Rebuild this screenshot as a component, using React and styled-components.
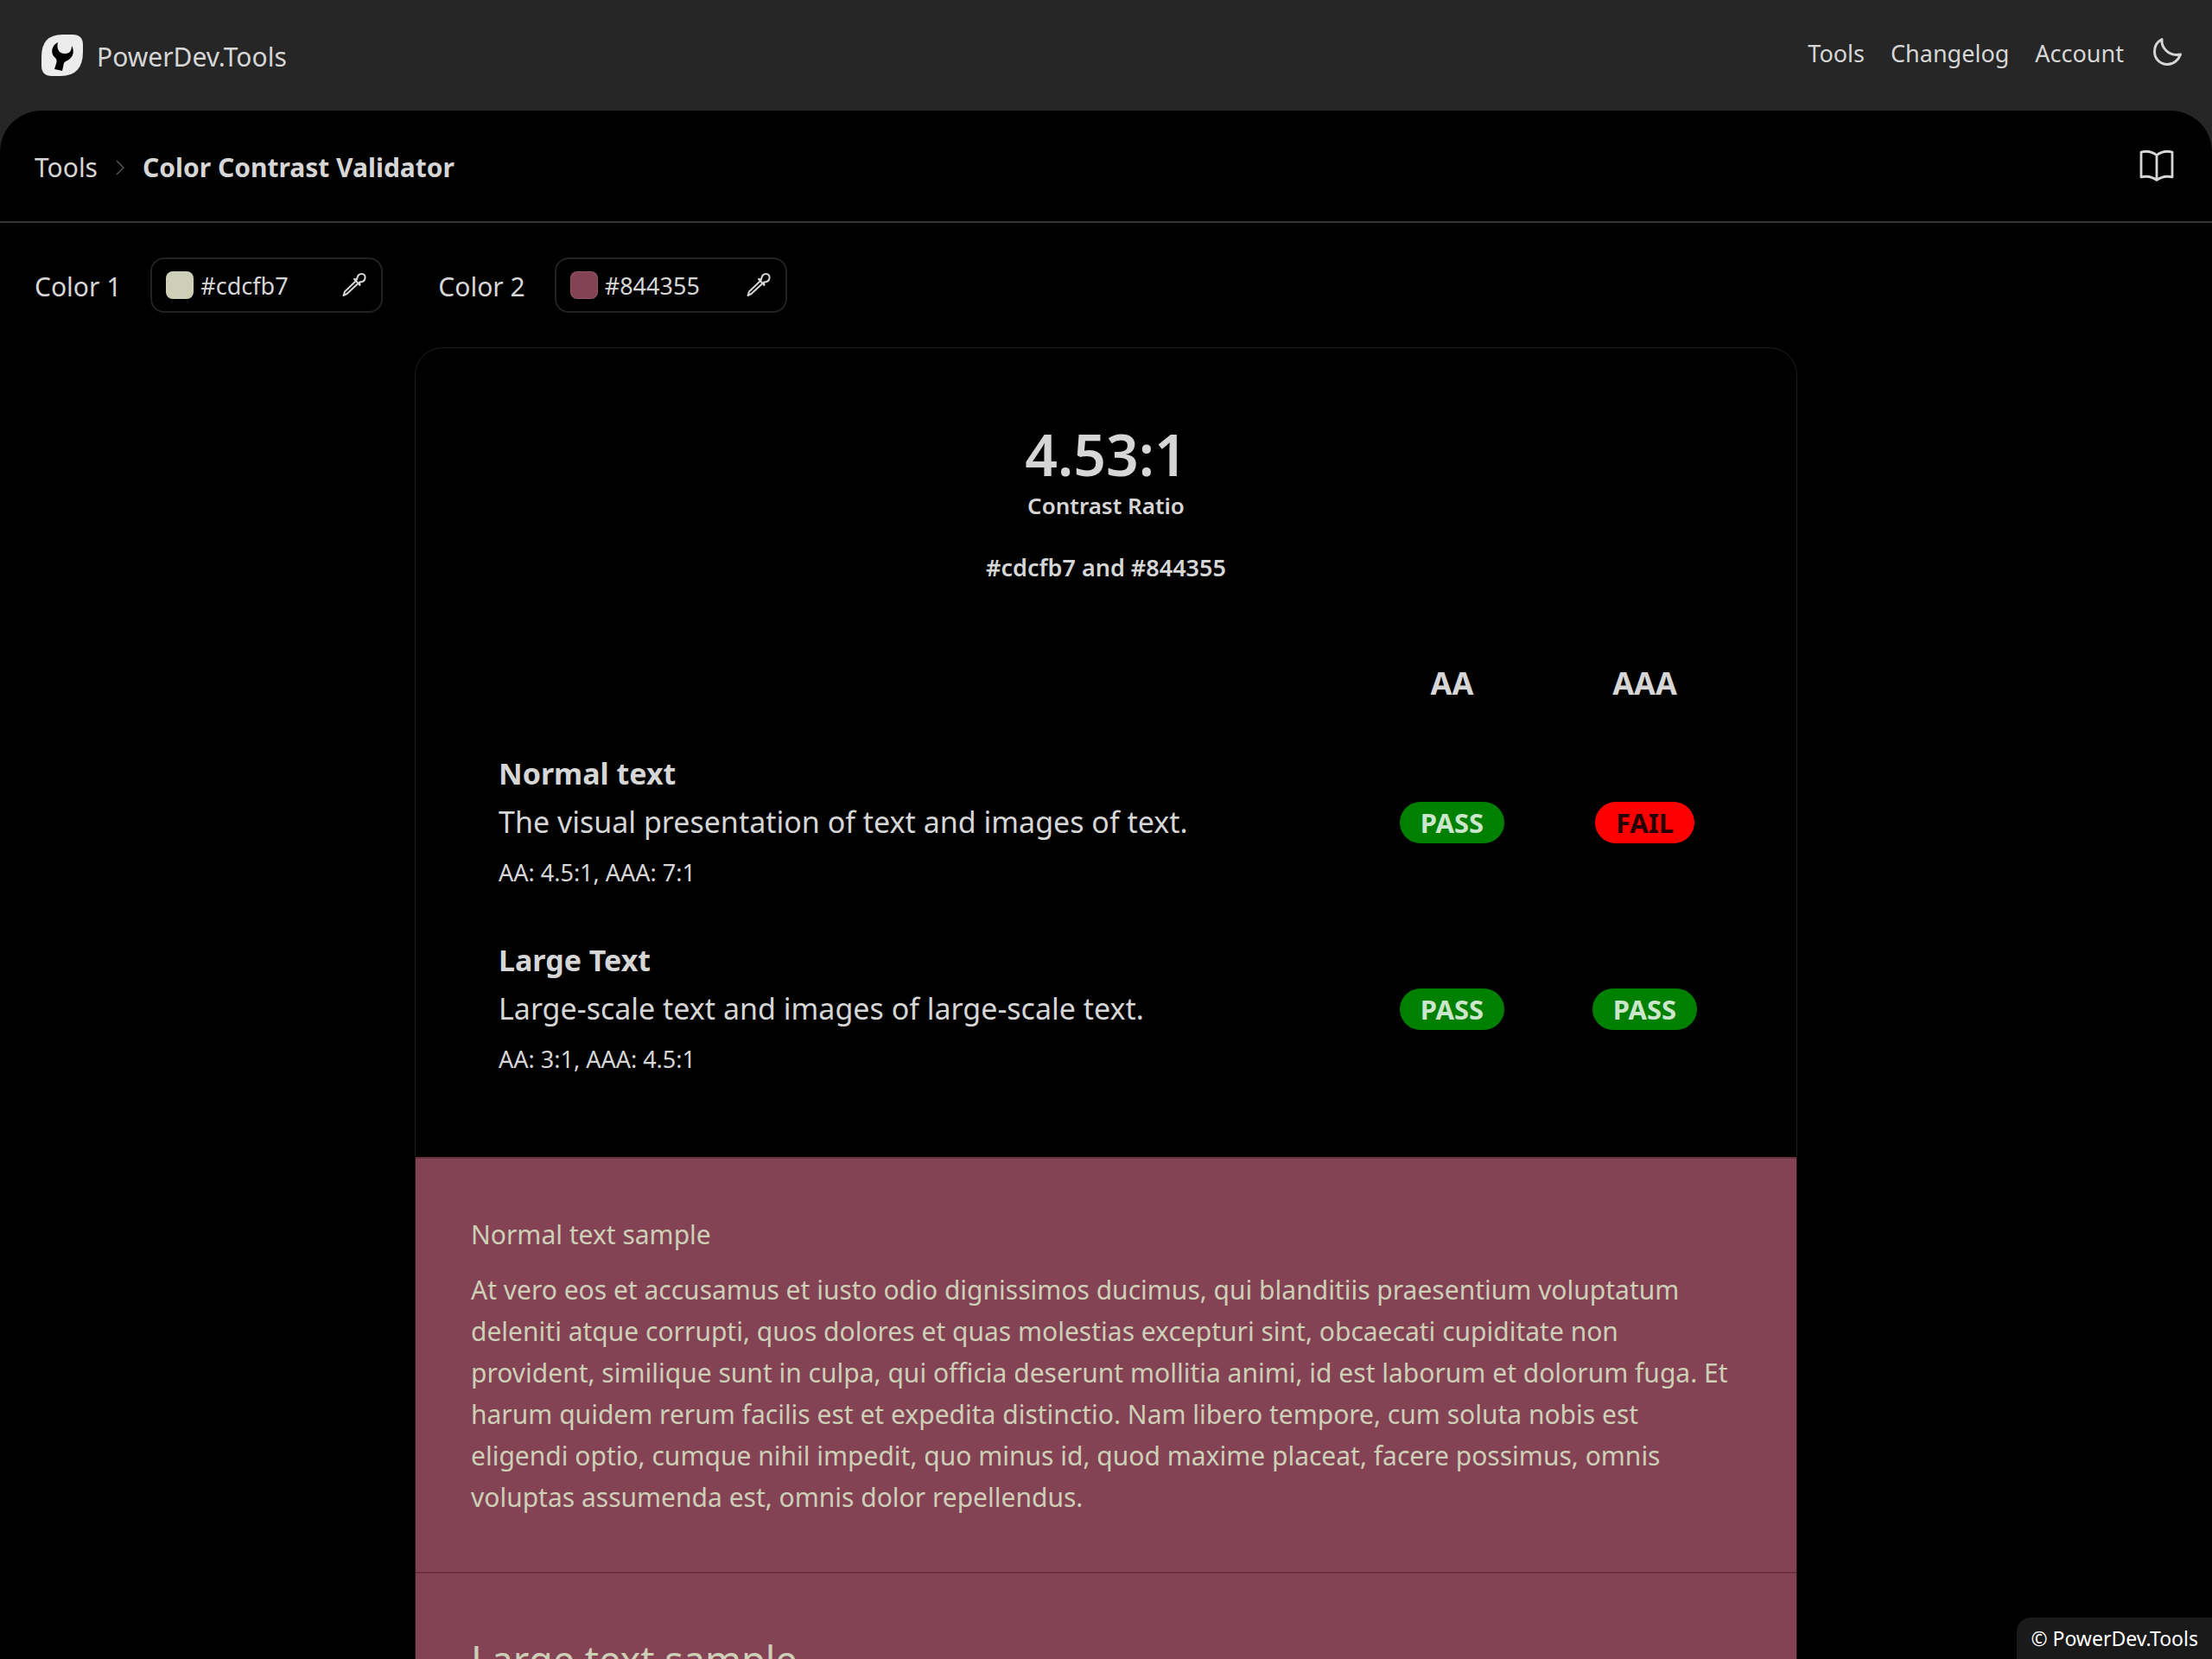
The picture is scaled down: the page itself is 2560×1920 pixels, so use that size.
import React, { useState } from "react";
import styled, { createGlobalStyle, css } from "styled-components";

const GlobalStyle = createGlobalStyle`
  * {
    box-sizing: border-box;
  }
  html {
    scrollbar-width: none;
  }
  body {
    margin: 0;
    background-color: #262626;
    color: #d6d6d6;
    font-family: "Noto Sans", "Open Sans", sans-serif;
    font-size: 30px;
    line-height: 48px;
  }
  a {
    color: inherit;
    text-decoration: none;
  }
  h1, h2, p {
    margin: 0;
    font-weight: 400;
  }
`;

const Header = styled.header`
  display: flex;
  align-items: center;
  justify-content: space-between;
  height: 128px;
  padding: 0 32px 0 48px;
`;

const Brand = styled.a`
  display: flex;
  align-items: center;
  gap: 16px;
`;

const BrandName = styled.span`
  padding-top: 3px;
`;

const Nav = styled.nav`
  display: flex;
  align-items: center;
  gap: 30px;
  padding-bottom: 4px;
  font-size: 27px;
`;

const IconButton = styled.button`
  display: flex;
  padding: 0;
  border: 0;
  background: none;
  color: inherit;
  cursor: pointer;
`;

const Main = styled.main`
  min-height: calc(100vh - 128px);
  border-radius: 48px 48px 0 0;
  background-color: #000000;
`;

const TitleBar = styled.div`
  display: flex;
  align-items: center;
  justify-content: space-between;
  height: 130px;
  padding: 0 40px;
  border-bottom: 2px solid #333333;
`;

const Breadcrumb = styled.div`
  display: flex;
  align-items: center;
  gap: 21px;
  padding-top: 3px;
`;

const PageTitle = styled.h1`
  font-size: 30px;
  font-weight: 700;
`;

const ColorForm = styled.form`
  display: flex;
  gap: 64px;
  padding: 40px;
`;

const Field = styled.div`
  display: flex;
  align-items: center;
  gap: 34px;
`;

const Label = styled.label`
  padding-top: 3px;
`;

const ColorBox = styled.div`
  display: flex;
  align-items: center;
  width: 269px;
  height: 64px;
  padding: 0 16px;
  border: 2px solid #222222;
  border-radius: 16px;
`;

const Swatch = styled.span`
  flex: none;
  width: 32px;
  height: 32px;
  border: 1px solid rgba(255, 255, 255, 0.1);
  border-radius: 8px;
`;

const ColorInput = styled.input`
  flex: 1;
  min-width: 0;
  padding: 2px 8px 0;
  border: 0;
  outline: 0;
  background: none;
  color: inherit;
  font: inherit;
  font-size: 27px;
`;

const Card = styled.section`
  max-width: 1600px;
  margin: 0 auto;
  border: 1px solid #1c1c1c;
  border-radius: 32px 32px 0 0;
`;

const Ratio = styled.div`
  padding: 86px 64px 62px;
  line-height: 40px;
  text-align: center;
`;

const RatioValue = styled.div`
  margin-bottom: 4px;
  font-size: 66px;
  font-weight: 600;
  line-height: 72px;
`;

const RatioLabel = styled.p`
  font-size: 26px;
  font-weight: 600;
`;

const RatioColors = styled.p`
  margin-top: 32px;
  font-size: 27px;
  font-weight: 600;
`;

const Results = styled.div`
  padding: 0 64px 64px;
`;

const ResultsTable = styled.table`
  width: 100%;
  border-spacing: 0;
  font-size: 34px;
  line-height: 56px;

  th {
    font-weight: 700;
  }
  th, td {
    padding: 24px 32px;
  }
`;

const LevelHead = styled.th`
  width: 223px;
  font-size: 36px;
`;

const Criterion = styled.th`
  text-align: left;

  p {
    font-weight: 400;
  }
`;

const Limits = styled.p`
  margin: 3px 0 -3px;
  font-size: 27px;
`;

const ResultCell = styled.td`
  text-align: center;
`;

const Badge = styled.span`
  display: inline-block;
  padding: 0 24px;
  border-radius: 24px;
  font-size: 31px;
  font-weight: 700;
  line-height: 48px;
  ${({ $pass }) =>
    $pass
      ? css`
          background-color: #008000;
          color: #cce6cc;
        `
      : css`
          background-color: #ff0000;
          color: #260000;
        `}
`;

const Sample = styled.div`
  padding: 66px 64px 62px;
  box-shadow: inset 0 2px 0 #6b3042;
`;

const SampleTitle = styled.h2`
  margin-bottom: 16px;
  font-size: ${({ $large }) => ($large ? "45px" : "30px")};
  line-height: ${({ $large }) => ($large ? "72px" : "48px")};
`;

const SampleText = styled.p`
  font-size: ${({ $large }) => ($large ? "45px" : "30px")};
  line-height: ${({ $large }) => ($large ? "72px" : "48px")};
`;

const Copyright = styled.footer`
  position: fixed;
  right: 0;
  bottom: 0;
  padding: 0 16px;
  border-radius: 16px 0 0 0;
  background-color: #1a1a1a;
  color: #ffffff;
  font-size: 23px;
`;

const criteria = [
  {
    name: "Normal text",
    text: "The visual presentation of text and images of text.",
    limits: "AA: 4.5:1, AAA: 7:1",
    aa: true,
    aaa: false,
  },
  {
    name: "Large Text",
    text: "Large-scale text and images of large-scale text.",
    limits: "AA: 3:1, AAA: 4.5:1",
    aa: true,
    aaa: true,
  },
];

const lorem =
  "At vero eos et accusamus et iusto odio dignissimos ducimus, qui blanditiis praesentium voluptatum deleniti atque corrupti, quos dolores et quas molestias excepturi sint, obcaecati cupiditate non provident, similique sunt in culpa, qui officia deserunt mollitia animi, id est laborum et dolorum fuga. Et harum quidem rerum facilis est et expedita distinctio. Nam libero tempore, cum soluta nobis est eligendi optio, cumque nihil impedit, quo minus id, quod maxime placeat, facere possimus, omnis voluptas assumenda est, omnis dolor repellendus.";

const Logo = () => (
  <svg width="48" height="48" viewBox="0 0 48 48" aria-hidden="true">
    <path
      d="M24 0H36Q48 0 48 12V20Q48 48 22 48H12Q0 48 0 36V26Q0 0 24 0Z"
      fill="#ececec"
    />
    <path
      d="M19 9C12 12 10 21 15 26Q18 28 17.500 32L15 40L24 42L26 33Q27 31 30 30C36 27 39 20 35 13C35 18 33 22 28 22C21 23 17 17 19 9Z"
      fill="#000000"
    />
  </svg>
);

const Chevron = () => (
  <svg
    width="10"
    height="18"
    viewBox="0 0 10 18"
    fill="none"
    stroke="#555555"
    strokeWidth="1.5"
    aria-hidden="true"
  >
    <path d="M1 1L9 9L1 17" />
  </svg>
);

const MoonIcon = () => (
  <svg
    width="40"
    height="40"
    viewBox="0 0 40 40"
    fill="none"
    stroke="currentColor"
    strokeWidth="3"
    strokeLinejoin="round"
    aria-hidden="true"
  >
    <path d="M14 3.500C13 12 21 24 35.500 21C33 28 27 32.500 20.500 32.500C12 32.500 5.500 26 5.500 18C5.500 11 9 6 14 3.500Z" />
  </svg>
);

const BookIcon = () => (
  <svg
    width="48"
    height="40"
    viewBox="0 0 48 40"
    fill="none"
    stroke="currentColor"
    strokeWidth="2.8"
    strokeLinejoin="round"
    aria-hidden="true"
  >
    <path d="M24 7.500C18 3 12 2.500 6 4V33C12 31.500 18 32 24 36.500C30 32 36 31.500 42 33V4C36 2.500 30 3 24 7.500V36.500" />
  </svg>
);

const DropperIcon = () => (
  <svg
    width="32"
    height="32"
    viewBox="0 0 32 32"
    fill="none"
    stroke="currentColor"
    strokeWidth="2"
    strokeLinejoin="round"
    strokeLinecap="round"
    aria-hidden="true"
  >
    <path d="M17 9L20 9.500C20.500 5 22 3 25.500 3C28.500 3 30 5 29.500 8C29 11 26 12.500 23 12.500L23.500 16Z" />
    <path d="M18.500 11.500L6 23.500L4.500 28L8.500 26L21.500 14" />
  </svg>
);

function ColorField({ id, label, value, onChange }) {
  return (
    <Field>
      <Label htmlFor={id}>{label}</Label>
      <ColorBox>
        <Swatch style={{ backgroundColor: value }} />
        <ColorInput
          id={id}
          value={value}
          onChange={(e) => onChange(e.target.value)}
        />
        <IconButton type="button" aria-label="Pick color">
          <DropperIcon />
        </IconButton>
      </ColorBox>
    </Field>
  );
}

function App() {
  const [color1, setColor1] = useState("#cdcfb7");
  const [color2, setColor2] = useState("#844355");
  const sampleColors = { color: color1, backgroundColor: color2 };

  return (
    <>
      <GlobalStyle />
      <Header>
        <Brand href="#">
          <Logo />
          <BrandName>PowerDev.Tools</BrandName>
        </Brand>
        <Nav>
          <a href="#tools">Tools</a>
          <a href="#changelog">Changelog</a>
          <a href="#account">Account</a>
          <IconButton type="button" aria-label="Theme">
            <MoonIcon />
          </IconButton>
        </Nav>
      </Header>
      <Main>
        <TitleBar>
          <Breadcrumb>
            <a href="#tools">Tools</a>
            <Chevron />
            <PageTitle>Color Contrast Validator</PageTitle>
          </Breadcrumb>
          <IconButton type="button" aria-label="Documentation">
            <BookIcon />
          </IconButton>
        </TitleBar>
        <ColorForm>
          <ColorField
            id="color1"
            label="Color 1"
            value={color1}
            onChange={setColor1}
          />
          <ColorField
            id="color2"
            label="Color 2"
            value={color2}
            onChange={setColor2}
          />
        </ColorForm>
        <Card>
          <Ratio>
            <RatioValue>4.53:1</RatioValue>
            <RatioLabel>Contrast Ratio</RatioLabel>
            <RatioColors>
              {color1} and {color2}
            </RatioColors>
          </Ratio>
          <Results>
            <ResultsTable>
              <thead>
                <tr>
                  <td />
                  <LevelHead scope="col">AA</LevelHead>
                  <LevelHead scope="col">AAA</LevelHead>
                </tr>
              </thead>
              <tbody>
                {criteria.map(({ name, text, limits, aa, aaa }) => (
                  <tr key={name}>
                    <Criterion scope="row">
                      {name}
                      <p>{text}</p>
                      <Limits>{limits}</Limits>
                    </Criterion>
                    <ResultCell>
                      <Badge $pass={aa}>{aa ? "PASS" : "FAIL"}</Badge>
                    </ResultCell>
                    <ResultCell>
                      <Badge $pass={aaa}>{aaa ? "PASS" : "FAIL"}</Badge>
                    </ResultCell>
                  </tr>
                ))}
              </tbody>
            </ResultsTable>
          </Results>
          <Sample style={sampleColors}>
            <SampleTitle>Normal text sample</SampleTitle>
            <SampleText>{lorem}</SampleText>
          </Sample>
          <Sample style={sampleColors}>
            <SampleTitle $large>Large text sample</SampleTitle>
            <SampleText $large>{lorem}</SampleText>
          </Sample>
        </Card>
      </Main>
      <Copyright>© PowerDev.Tools</Copyright>
    </>
  );
}

export default App;
